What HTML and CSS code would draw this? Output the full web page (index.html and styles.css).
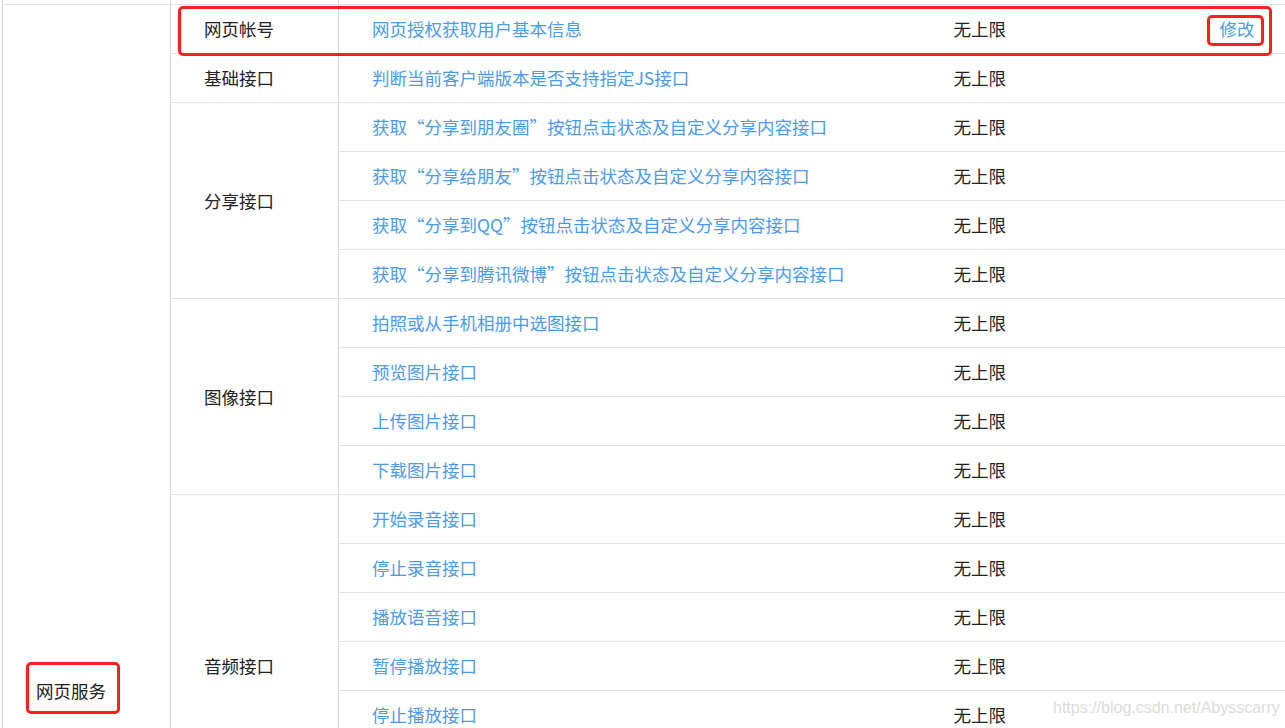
FILE: index.html
```html
<!DOCTYPE html>
<html lang="zh-CN">
<head>
    <meta charset="UTF-8">
    <title>接口权限</title>
    <link rel="stylesheet" href="styles.css">
</head>
<body>
<div class="page">
    <table class="perm">
        <colgroup>
            <col class="c-group">
            <col class="c-sub">
            <col class="c-api">
            <col class="c-limit">
            <col class="c-op">
        </colgroup>
        <tr class="head">
            <td class="bl br"></td><td class="br"></td><td></td><td></td><td></td>
        </tr>
        <tr>
            <td rowspan="28" class="group">网页服务</td>
            <td class="sub">网页帐号</td>
            <td><a class="api">网页授权获取用户基本信息</a></td>
            <td>无上限</td>
            <td><a class="api">修改</a></td>
        </tr>
        <tr>
            <td class="sub">基础接口</td>
            <td><a class="api">判断当前客户端版本是否支持指定JS接口</a></td>
            <td>无上限</td><td></td>
        </tr>
        <tr>
            <td rowspan="4" class="sub">分享接口</td>
            <td><a class="api">获取“分享到朋友圈”按钮点击状态及自定义分享内容接口</a></td>
            <td>无上限</td><td></td>
        </tr>
        <tr><td><a class="api">获取“分享给朋友”按钮点击状态及自定义分享内容接口</a></td><td>无上限</td><td></td></tr>
        <tr><td><a class="api">获取“分享到QQ”按钮点击状态及自定义分享内容接口</a></td><td>无上限</td><td></td></tr>
        <tr><td><a class="api">获取“分享到腾讯微博”按钮点击状态及自定义分享内容接口</a></td><td>无上限</td><td></td></tr>
        <tr>
            <td rowspan="4" class="sub">图像接口</td>
            <td><a class="api">拍照或从手机相册中选图接口</a></td>
            <td>无上限</td><td></td>
        </tr>
        <tr><td><a class="api">预览图片接口</a></td><td>无上限</td><td></td></tr>
        <tr><td><a class="api">上传图片接口</a></td><td>无上限</td><td></td></tr>
        <tr><td><a class="api">下载图片接口</a></td><td>无上限</td><td></td></tr>
        <tr>
            <td rowspan="7" class="sub">音频接口</td>
            <td><a class="api">开始录音接口</a></td>
            <td>无上限</td><td></td>
        </tr>
        <tr><td><a class="api">停止录音接口</a></td><td>无上限</td><td></td></tr>
        <tr><td><a class="api">播放语音接口</a></td><td>无上限</td><td></td></tr>
        <tr><td><a class="api">暂停播放接口</a></td><td>无上限</td><td></td></tr>
        <tr><td><a class="api">停止播放接口</a></td><td>无上限</td><td></td></tr>
        <tr><td><a class="api">上传语音接口</a></td><td>无上限</td><td></td></tr>
        <tr><td><a class="api">下载语音接口</a></td><td>无上限</td><td></td></tr>
        <tr>
            <td class="sub">智能接口</td>
            <td><a class="api">识别音频并返回识别结果接口</a></td>
            <td>无上限</td><td></td>
        </tr>
        <tr>
            <td class="sub">设备信息</td>
            <td><a class="api">获取网络状态接口</a></td>
            <td>无上限</td><td></td>
        </tr>
        <tr>
            <td rowspan="2" class="sub">地理位置</td>
            <td><a class="api">使用微信内置地图查看位置接口</a></td>
            <td>无上限</td><td></td>
        </tr>
        <tr><td><a class="api">获取地理位置接口</a></td><td>无上限</td><td></td></tr>
        <tr>
            <td rowspan="7" class="sub">界面操作</td>
            <td><a class="api">隐藏右上角菜单接口</a></td>
            <td>无上限</td><td></td>
        </tr>
        <tr><td><a class="api">显示右上角菜单接口</a></td><td>无上限</td><td></td></tr>
        <tr><td><a class="api">关闭当前网页窗口接口</a></td><td>无上限</td><td></td></tr>
        <tr><td><a class="api">批量隐藏功能按钮接口</a></td><td>无上限</td><td></td></tr>
        <tr><td><a class="api">批量显示功能按钮接口</a></td><td>无上限</td><td></td></tr>
        <tr><td><a class="api">隐藏所有非基础按钮接口</a></td><td>无上限</td><td></td></tr>
        <tr><td><a class="api">显示所有功能按钮接口</a></td><td>无上限</td><td></td></tr>
    </table>

    <!-- red marks drawn over the screenshot -->
    <div class="mark mark-row"></div>
    <div class="mark mark-edit"></div>
    <div class="mark mark-group"></div>

    <div class="watermark">https://blog.csdn.net/Abysscarry</div>
</div>
</body>
</html>
```

FILE: styles.css
```css
html, body {
    margin: 0;
    overflow: hidden;
    background: #fff;
}

body {
    font-family: "Noto Sans CJK SC", "Liberation Sans", sans-serif;
    font-size: 17.5px;
    color: #222;
}

.page {
    position: relative;
    padding-left: 2px;
}

/* permission table */
.perm {
    border-collapse: collapse;
    table-layout: fixed;
    width: 1300px;
}

.c-group { width: 168px; }
.c-sub   { width: 168px; }
.c-api   { width: 582px; }
.c-limit { width: 266px; }
.c-op    { width: 116px; }

.perm td {
    height: 48px;
    padding: 0 0 0 33px;
    border-bottom: 1px solid #e4e4e6;
    white-space: nowrap;
    overflow: hidden;
    vertical-align: middle;
    line-height: 20px;
}

.perm .head td {
    height: 4px;
}

.perm .bl { border-left: 1px solid #d6d6d8; }
.perm .br { border-right: 1px solid #d6d6d8; }

.perm .group {
    border-left: 1px solid #d6d6d8;
    border-right: 1px solid #d6d6d8;
    border-bottom: none;
}

.perm .sub {
    border-right: 1px solid #d6d6d8;
}

.api {
    color: #4b9be8;
    text-decoration: none;
    cursor: pointer;
}

/* annotation boxes */
.mark {
    position: absolute;
    border: 3px solid #ff1f1f;
    border-radius: 5px;
    box-sizing: border-box;
}

.mark-row {
    left: 178px;
    top: 6px;
    width: 1094px;
    height: 50px;
}

.mark-edit {
    left: 1207px;
    top: 15px;
    width: 57px;
    height: 31px;
}

.mark-group {
    left: 26px;
    top: 662px;
    width: 94px;
    height: 52px;
}

.watermark {
    position: absolute;
    left: 1053px;
    top: 699px;
    font-family: "Liberation Sans", Arial, sans-serif;
    font-size: 16px;
    color: #dcdcdc;
    white-space: nowrap;
}
```
